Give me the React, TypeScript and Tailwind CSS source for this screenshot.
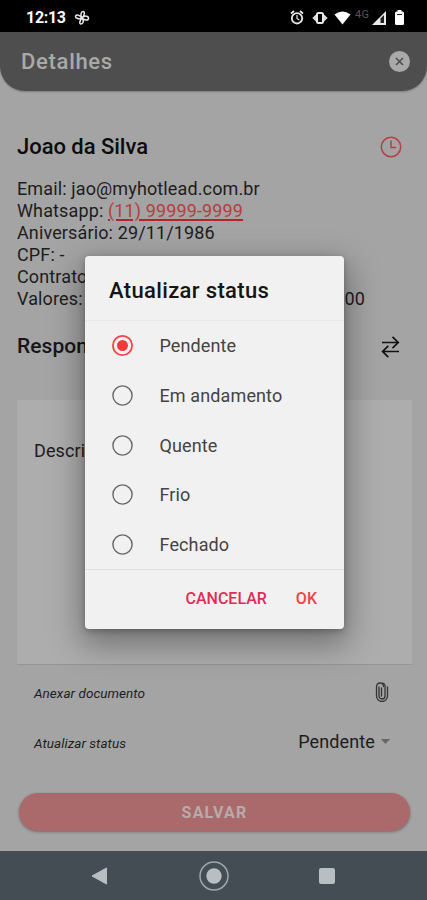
import React from "react";

const statuses = ["Pendente", "Em andamento", "Quente", "Frio", "Fechado"];

function StatusBar() {
  return (
    <div className="flex h-8 shrink-0 items-center bg-black pl-[26px] pr-[23px] pt-[3px] text-white">
      <span className="text-[16px] font-bold leading-none tracking-[-0.3px]">12:13</span>
      <svg className="ml-[8px]" width="16" height="16" viewBox="0 0 16 16" fill="none" stroke="#e8e8e8" strokeWidth="1.5">
        <path d="M8 8C6 5 7 1.5 9 1.5S11 5 8 8ZM8 8C11 5 14.5 6 14.5 8.2S11 11 8 8ZM8 8C10.500 11 9 14 7 14S5.500 11 8 8ZM8 8C5 9.500 1.500 8.500 1.500 6.500S5 4 8 8Z" />
      </svg>
      <div className="ml-auto flex items-center">
        <svg width="14" height="15" viewBox="0 0 14 15" fill="none" stroke="#e8e8e8">
          <circle cx="7" cy="8.300" r="5.200" strokeWidth="1.800" />
          <path d="M1 3.500 4 1M13 3.500 10 1" strokeWidth="1.800" />
          <path d="M7 5v3.500l2.300 1.500" strokeWidth="1.200" />
        </svg>
        <svg className="ml-[8px]" width="16" height="14" viewBox="0 0 16 14" fill="none" stroke="#e8e8e8">
          <rect x="5" y="2" width="6" height="10" rx="1.500" strokeWidth="2" />
          <path d="M4 3.500v7L.3 7ZM12 3.500v7L15.700 7Z" fill="#ddd" stroke="none" />
        </svg>
        <svg className="ml-[6px]" width="17" height="14" viewBox="0 0 17 14">
          <path d="M.5 3.500Q8.500-2.500 16.500 3.500L8.500 13.500Z" fill="#fff" />
        </svg>
        <span className="-mt-1.5 ml-[4px] w-[15px] text-[11px] leading-none tracking-[0.3px] text-[#555]">4G</span>
        <svg className="ml-[2px]" width="14" height="14" viewBox="0 0 14 14">
          <path d="M0 14 14 0V14Z" fill="#e8e8e8" />
          <path d="M8.500 7.500 12 4V12H8.500Z" fill="#222" />
        </svg>
        <svg className="ml-[9px]" width="9" height="15" viewBox="0 0 9 15">
          <path d="M2.500 0h4v1.500h1Q9 1.500 9 3v10.500Q9 15 7.500 15h-6Q0 15 0 13.500V3Q0 1.500 1.500 1.500h1Z" fill="#fff" />
          <path d="M2 4.500h5" stroke="#222" strokeWidth="1" />
        </svg>
      </div>
    </div>
  );
}

function Header() {
  return (
    <header className="flex h-[59px] shrink-0 items-center justify-between rounded-b-[25px] bg-[#4e4e4e] pl-[21px] pr-[17px] shadow-[0_1px_2px_rgba(0,0,0,0.25)]">
      <h1 className="text-[22px] font-medium tracking-[0.7px] text-[#a9a9a9]">Detalhes</h1>
      <svg width="21" height="21" viewBox="0 0 21 21">
        <circle cx="10.500" cy="10.500" r="10.500" fill="#a9a9a9" />
        <path d="m7 7 7 7m0-7-7 7" stroke="#4e4e4e" strokeWidth="1.600" />
      </svg>
    </header>
  );
}

function Details() {
  return (
    <main className="flex h-[760px] shrink-0 flex-col px-[17px] text-[18px] text-[#1d1d1d]">
      <div className="mt-[41px] flex h-[30px] items-center justify-between pr-2">
        <h2 className="pb-[2px] text-[22px] font-medium tracking-[-0.03px] text-[#0c0c0c]">Joao da Silva</h2>
        <svg width="22" height="22" viewBox="0 0 22 22" fill="none" stroke="#b83e46" strokeWidth="1.500">
          <circle cx="11" cy="11" r="9.700" />
          <path d="M11 4.500V11.500H16" />
        </svg>
      </div>
      <div className="mt-[16px] whitespace-nowrap leading-[22px] tracking-[0.13px]">
        <p>Email: jao@myhotlead.com.br</p>
        <p>Whatsapp: <a className="text-[#b83c42] underline decoration-[#b0262c] decoration-[1.500px] underline-offset-[2px]">(11) 99999-9999</a></p>
        <p>Aniversário: 29/11/1986</p>
        <p>CPF: -</p>
        <p>Contrato</p>
        <p className="flex w-[348px] justify-between"><span>Valores:</span><span>00</span></p>
      </div>
      <div className="mt-[22px] flex h-[30px] items-center justify-between pr-[10px]">
        <h2 className="text-[21px] font-medium tracking-[0.05px] text-[#161616]">Responsável</h2>
        <svg width="19" height="22" viewBox="0 0 19 22" fill="none" stroke="#111" strokeWidth="1.700">
          <path d="M1 6.500H17.500M11.500 .8l5.700 5.700-5.700 5.700M18 15.500H1.500M7.300 9.800 1.600 15.500l5.700 5.700" />
        </svg>
      </div>
      <div className="-mr-[2px] mt-[38px] h-[265px] shrink-0 border-b border-[#969696] bg-[#adadad] pl-[17px] pt-[37px] leading-[28px] tracking-[0.13px]">Descrição</div>
      <div className="flex h-[52px] items-center justify-between pl-[17px] pr-[21px] pt-1">
        <span className="text-[13.5px] italic tracking-[0.05px]">Anexar documento</span>
        <svg className="mb-[3px]" width="14" height="20" viewBox="0 0 14 20" fill="none" stroke="#333" strokeWidth="1.300" strokeLinecap="round">
          <path d="M12.500 5v9a5.500 5.500 0 0 1-11 0V4.500a3.500 3.500 0 0 1 7 0M10 5v9a3 3 0 0 1-6 0V6M4 5v9M10 14V5a3.500 3.500 0 0 0-2-4M6.500 6v8" />
        </svg>
      </div>
      <div className="flex h-[48px] items-center justify-between pl-[17px] pr-[20px]">
        <span className="pt-1 text-[13.5px] italic tracking-[0.05px]">Atualizar status</span>
        <span className="flex items-center tracking-[0.13px]">
          Pendente
          <svg className="ml-[6px]" width="9" height="5" viewBox="0 0 9 5"><path d="M0 0h9L4.500 5Z" fill="#666" /></svg>
        </span>
      </div>
      <button className="ml-[2px] mt-[28px] h-[38px] w-[391px] shrink-0 rounded-full bg-[#aa6a6c] pt-px text-[16px] font-bold tracking-[1.2px] text-[#b8aaaa] shadow-[0_1px_3px_rgba(0,0,0,0.35)]">SALVAR</button>
    </main>
  );
}

function StatusDialog() {
  return (
    <div role="dialog" className="absolute left-[85px] top-[256px] flex h-[373px] w-[259px] flex-col rounded-[4px] bg-[#f1f1f1] shadow-[0_12px_32px_4px_rgba(0,0,0,0.34),0_2px_6px_rgba(0,0,0,0.25)]">
      <h2 className="flex h-[65px] shrink-0 items-center border-b border-[#eaeaea] pl-6 pt-1 text-[22px] font-medium tracking-[0.35px] text-[#151515]">Atualizar status</h2>
      <div className="flex flex-col">
        {statuses.map((status, i) => (
          <label key={status} className="flex h-[49.700px] items-center pl-[26.5px] text-[18px] tracking-[0.12px] text-[#444]">
            <svg className="mr-[27px]" width="21" height="21" viewBox="0 0 21 21" fill="none">
              <circle cx="10.500" cy="10.500" r="9.600" stroke={i === 0 ? "#f64248" : "#666"} strokeWidth={i === 0 ? 1.8 : 1.4} />
              {i === 0 && <circle cx="10.500" cy="10.500" r="5.500" fill="#f83a3f" />}
            </svg>
            {status}
          </label>
        ))}
      </div>
      <div className="flex flex-1 items-center justify-end border-t border-[#e2e2e2] pb-[2px] pr-[27px] text-[16px] font-medium">
        <button className="text-[#e02c57]">CANCELAR</button>
        <button className="ml-[29px] text-[#ef4446]">OK</button>
      </div>
    </div>
  );
}

function NavigationBar() {
  return (
    <nav className="flex h-[49px] shrink-0 items-center bg-[#454d54] pl-[91px] pr-[92px]">
      <svg width="17" height="18" viewBox="0 0 17 18"><path d="M1 9 15.500 1v16Z" fill="#b7bfc2" stroke="#b7bfc2" strokeLinejoin="round" /></svg>
      <svg className="ml-[91px]" width="30" height="30" viewBox="0 0 30 30" fill="none">
        <circle cx="15" cy="15" r="14" stroke="#9ca8ab" strokeWidth="1.500" />
        <circle cx="15" cy="15" r="7.700" fill="#b7bfc2" />
      </svg>
      <span className="ml-auto size-[16px] rounded-[2px] bg-[#b7bfc2]" />
    </nav>
  );
}

export default function App() {
  return (
    <div className="relative flex h-[900px] w-[427px] flex-col overflow-hidden bg-[#a4a4a4] font-[Roboto,sans-serif]">
      <StatusBar />
      <Header />
      <Details />
      <NavigationBar />
      <StatusDialog />
    </div>
  );
}
